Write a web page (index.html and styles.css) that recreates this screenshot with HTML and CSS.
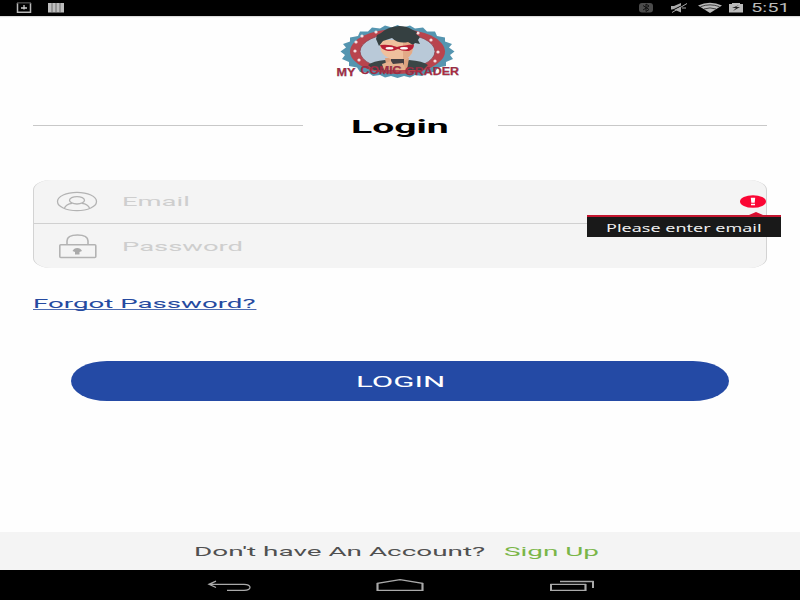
FILE: index.html
```html
<!DOCTYPE html>
<html lang="en">
<head>
<meta charset="utf-8">
<title>My Comic Grader</title>
<link rel="stylesheet" href="styles.css">
</head>
<body>
<div class="screen">
  <header class="status">
    <svg class="status-left" width="70" height="16" viewBox="0 0 70 16">
      <path d="M17.500 3v9.200h13V3" fill="none" stroke="#b8b8b8" stroke-width="1.500"/>
      <path d="M17 2.800h14" stroke="#444" stroke-width="1.500"/>
      <path d="M24 5v4.500M21 8h6" fill="none" stroke="#ccc" stroke-width="1.300"/>
      <path d="M48 3h16v9.500H48z" fill="#bdbdbd"/>
      <path d="M52 3v9.500M56 3v9.500M60 3v9.500" stroke="#555" stroke-width=".8"/>
    </svg>
    <svg class="status-right" width="110" height="16" viewBox="638 0 110 16">
      <rect x="639" y="3" width="14" height="9.500" rx="3" fill="#4b4b4b"/>
      <path d="M643 5.500l6 4-3 2V4l3 2-6 4" fill="none" stroke="#111" stroke-width="1"/>
      <path d="M671 6h3l7-3v9.500l-7-3h-3z" fill="#aaa"/>
      <path d="M671 11L686 3.500" stroke="#000" stroke-width="1"/>
      <path d="M672 12.500L687 3.500M682 8h4" stroke="#aaa" stroke-width="1"/>
      <path d="M698 5.500Q710 0 722 5.500L710 13z" fill="#bbb"/>
      <path d="M700.500 6.700Q710 3 719.500 6.700M704 9Q710 6.800 716 9" fill="none" stroke="#222" stroke-width=".8"/>
      <path d="M729 4h3V3h8v1h3v8.500h-14z" fill="#bbb"/>
      <path d="M739 5l-7 3h4l-3 3 7-4h-4z" fill="#222"/>
    </svg>
    <span class="clock"><span class="wide">5:51</span></span>
  </header>

  <main class="content">
    <svg class="logo" width="150" height="70" viewBox="0 0 150 70">
      <path class="seal" d="M72.500 9L78 11.500 85 9.500 90 12.500 98 11.500 102 15.500 110 15.500 112 20 120 21.500 120 25.500 127 28 124 31.500 129.500 35.500 125 39 128 43 121 46 121 50 113 51.500 110 56 102 56.500 97 60 90 59 85 61.500 79 60 72.500 62 66 60 60 61.500 55 59 48 60 43 56.500 35 56 32 51.500 24 50 24 46 17 43 20 39 15.500 35.500 21 31.500 18 28 25 25.500 25 21.500 33 20 35 15.500 43 15.500 47 11.500 55 12.500 60 9.500 67 11.500z"/>
      <ellipse cx="72.500" cy="35.500" rx="47.500" ry="22.500" fill="#b9444d"/>
      <ellipse cx="72.500" cy="35.500" rx="37.500" ry="18" fill="#b9c9d8" stroke="#8d3b48" stroke-width=".8"/>
      <g fill="#f3dfe1">
        <circle cx="51" cy="16" r="1.600"/><circle cx="93" cy="17" r="1.600"/>
        <circle cx="37" cy="20" r="1.600"/><circle cx="106" cy="24" r="1.600"/>
        <circle cx="31" cy="26" r="1.600"/><circle cx="113" cy="36" r="1.600"/>
        <circle cx="30" cy="35" r="1.600"/><circle cx="110" cy="45" r="1.600"/>
        <circle cx="34" cy="44" r="1.600"/>
      </g>
      <path d="M43 49Q48 45 60 44L73 49 84 44Q98 45 103 49L98 54H49z" fill="#3b4646"/>
      <path d="M60 42H84L82 54H62z" fill="#dca27f"/>
      <path d="M54 24H89L87 37Q83 43 78 45L68 44Q59 41 56 35z" fill="#efc09d"/>
      <path d="M78 26H89L87 37Q83 43 78 45z" fill="#e3aa87"/>
      <path d="M54 30L51 23 52 19 56 17Q62 11 74 10Q82 10 86 13L92 16 91 18 95 21 93 24 95 28 90 27 88 29 83 26Q73 28 67 22L58 25z" fill="#354041"/>
      <path d="M55 29Q65 28 72 31Q79 29 89 28.500Q89 33 84 35 77 35.500 73 33 67 36 61 34.500 56 33 55 29z" fill="#b91f34"/>
      <ellipse cx="64.500" cy="32.300" rx="4" ry="1.300" fill="#fff"/><ellipse cx="79" cy="32.300" rx="4" ry="1.300" fill="#fff"/>
      <path d="M66 43H79V53H66z" fill="#453f42"/>
      <path d="M57 48L66 45 68 48 78 47 81 54H59z" fill="#e6b18e"/>
      <g class="brand" lengthAdjust="spacingAndGlyphs">
        <text x="11.500" y="59.500" textLength="19" lengthAdjust="spacingAndGlyphs">MY</text>
        <text x="35.500" y="57.500" textLength="41" lengthAdjust="spacingAndGlyphs">COMIC</text>
        <text x="80" y="58.500" textLength="54" lengthAdjust="spacingAndGlyphs">GRADER</text>
      </g>
    </svg>

    <div class="heading">
      <i class="rule"></i>
      <h1><span class="wide">Login</span></h1>
      <i class="rule"></i>
    </div>

    <form class="fields">
      <div class="field email">
        <svg width="44" height="22" viewBox="0 0 44 22" fill="none" stroke="#b3b3b3" stroke-width="1.300">
          <ellipse cx="22" cy="10.500" rx="19.500" ry="9.200"/>
          <ellipse cx="22" cy="9.300" rx="7.500" ry="3.700"/>
          <path d="M9.500 17Q11 13 17 12.300M27 12.300Q33 13 34.500 17"/>
        </svg>
        <label><span class="wide">Email</span></label>
        <svg class="alert" width="26" height="13" viewBox="0 0 26 13">
          <ellipse cx="13" cy="6.500" rx="13" ry="6.300" fill="#fb0634"/>
          <path d="M10.800 2.700h4.400l-.5 5h-3.400zM11 8.700h4v1.600h-4z" fill="#fff"/>
        </svg>
        <div class="tooltip"><span class="wide">Please enter email</span></div>
      </div>
      <div class="field password">
        <svg width="44" height="28" viewBox="0 0 44 28" fill="none" stroke="#b3b3b3" stroke-width="1.600">
          <rect x="4.800" y="12.800" width="36" height="12.700" rx="1"/>
          <path d="M12 12.500V9Q12 3 22.500 3T33 9V12.500"/>
          <path d="M17.500 19Q19 16 22.300 16T27 19L24.500 20V22.500H20V20z" fill="#aaa" stroke="none"/>
        </svg>
        <label><span class="wide">Password</span></label>
      </div>
    </form>

    <a class="forgot"><span class="wide">Forgot Password?</span></a>
    <button class="submit"><span class="wide">LOGIN</span></button>
  </main>

  <footer class="signup">
    <span class="question"><span class="wide">Don't have An Account?</span></span>
    <a class="join"><span class="wide">Sign Up</span></a>
  </footer>

  <nav class="keys">
    <svg width="800" height="30" viewBox="0 0 800 30" fill="none" stroke="#a9a9a9" stroke-width="1.300">
      <path d="M216 11.200L209 14.300 216 17.500M209 14.300H244Q250 14.500 250 17.300T244 20.400H227"/>
      <path d="M377.500 20.400V13.300L400 9.700 422.500 13.300V20.400z"/>
      <path d="M551 14.300H585.500V20.400H551zM560 11.500H593V18"/>
      <path d="M377.500 13V21M422.500 13V21M551 14V21M585.500 14V21M593 11V18" stroke-width="2"/>
    </svg>
  </nav>
</div>
</body>
</html>
```
FILE: styles.css
```css
* { box-sizing: border-box; }
body { margin: 0; font-family: Roboto, "Liberation Sans", sans-serif; }
.screen { width: 800px; height: 600px; display: flex; flex-direction: column; background: #fefefe; overflow: hidden; }

/* Stretched lettering: the box keeps its natural width, the glyphs widen rightwards. */
.wide { display: inline-block; white-space: nowrap; transform: scaleX(2.05); transform-origin: left center; }

.status { height: 16px; flex: none; display: flex; background: #000; box-shadow: 0 1px 1px #ddd; }
.status-right { margin-left: 568px; }
.clock { margin-left: 3px; color: #bbb; font-size: 12px; line-height: 16px; }
.clock .wide { transform: scaleX(1.68); }

.content { flex: 1; display: flex; flex-direction: column; align-items: flex-start; padding: 0 33px; }
.logo { margin-left: 292px; flex: none; }
.seal { fill: #5595b0; }
.brand { font: bold 10px "Liberation Sans", sans-serif; fill: #b02a40; stroke: #61374d; stroke-width: .25px; }

.heading { display: flex; align-items: center; width: 734px; height: 30px; margin-top: 24px; }
.rule { height: 1px; background: #c8c8c8; width: 270px; }
.rule:last-child { width: 269px; }
h1 { margin: 3px 0 0 48px; width: 147px; font-size: 18px; line-height: 30px; font-weight: 700; color: #000; }
h1 .wide { transform: scaleX(2.17); }

.fields { width: 734px; height: 88px; margin-top: 40px; background: #f4f4f4; border: solid #d3d3d3; border-width: 0 1px; border-radius: 18px / 10px; }
.field { position: relative; display: flex; align-items: center; height: 44px; padding-left: 21px; color: #cecece; font-size: 13.5px; }
.email { border-bottom: 1px solid #d0d0d0; }
.email label { margin-bottom: 1px; }
.field label { margin-left: 22.5px; }
.field label .wide { transform: scaleX(2.03); }
.alert { position: absolute; right: 0; top: 15px; }
.tooltip { position: absolute; z-index: 1; left: 553px; top: 35px; width: 194px; height: 22px; padding-left: 18.5px; background: #191919; border-top: 2px solid #c4152f; color: #eee; font: 10px/22px "Noto Sans", sans-serif; }
.tooltip::before { content: ""; position: absolute; left: 162px; top: -5px; border: solid transparent; border-width: 0 7px 3px; border-bottom-color: #dc0c30; }
.tooltip .wide { transform: scaleX(1.8); }

.forgot { margin-top: 27px; height: 16px; line-height: 16px; font-size: 13.5px; color: #254aa0; }
.forgot .wide { height: 15px; border-bottom: 1px solid #4c6bb1; line-height: 17px; }

.submit { width: 658px; height: 40px; margin: 50px 0 0 38px; padding: 1px 0 0 285px; text-align: left; border: 0; border-radius: 36px / 20px; background: #244aa5; color: #fff; font: 15px Roboto, sans-serif; }
.submit .wide { transform: scaleX(2.08); }

.signup { height: 38px; flex: none; display: flex; background: #f4f4f4; padding-left: 194px; line-height: 39px; font-size: 13.5px; color: #505050; }
.signup .wide { transform: scaleX(2.065); }
.question { width: 310px; }
.join { color: #7ab648; }
.keys { height: 30px; flex: none; background: #000; }
```
